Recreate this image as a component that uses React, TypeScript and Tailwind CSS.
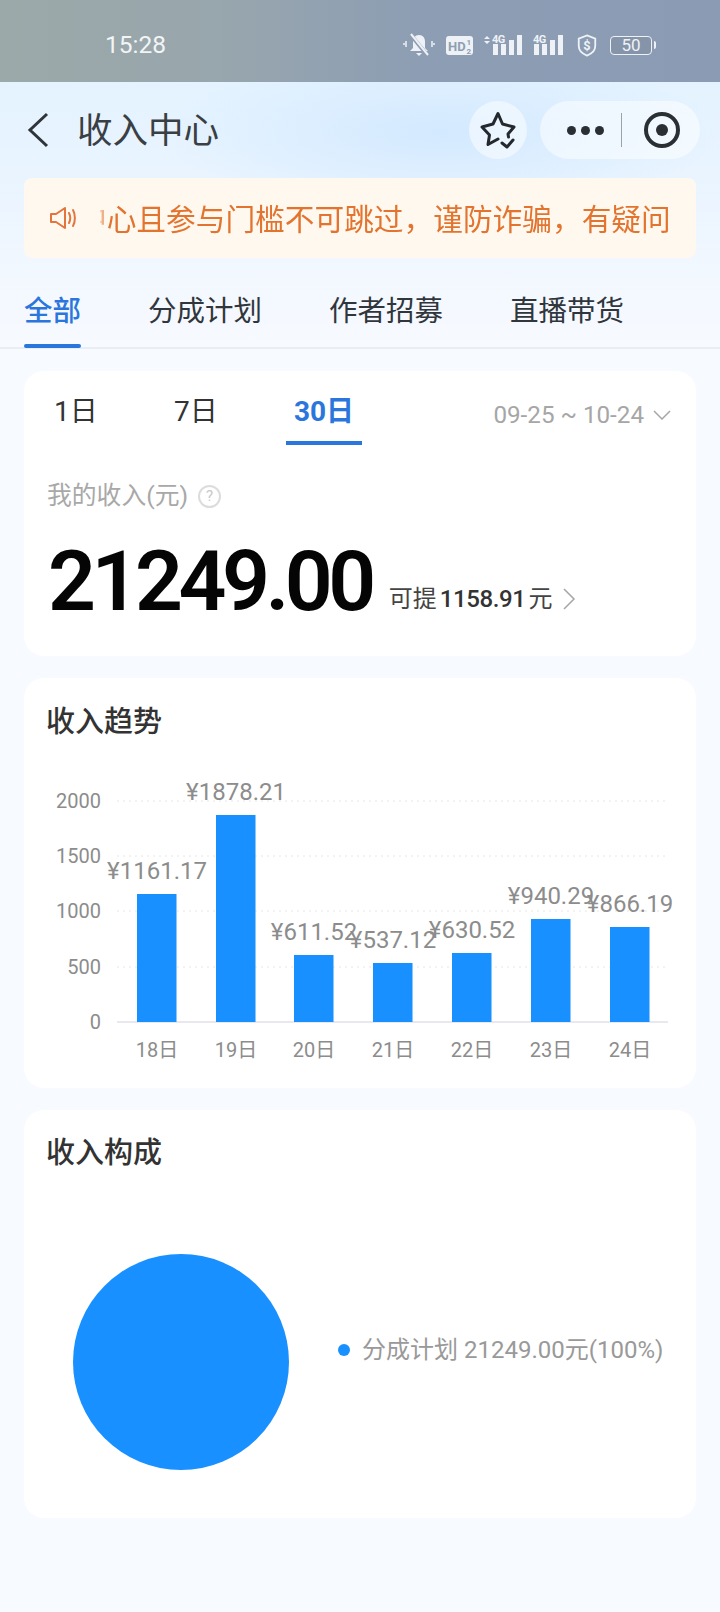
const FONT = "font-['Roboto','Noto_Sans_CJK_SC',sans-serif]";

const TABS = ["全部", "分成计划", "作者招募", "直播带货"];

const BARS = [
  { day: "18日", label: "¥1161.17", x: 113, top: 895 },
  { day: "19日", label: "¥1878.21", x: 192, top: 816 },
  { day: "20日", label: "¥611.52", x: 270, top: 956 },
  { day: "21日", label: "¥537.12", x: 349, top: 964 },
  { day: "22日", label: "¥630.52", x: 428, top: 954 },
  { day: "23日", label: "¥940.29", x: 507, top: 920 },
  { day: "24日", label: "¥866.19", x: 586, top: 928 },
];

// y positions are page pixels minus the chart's top edge (770)
const CHART_TOP = 770;
const TICKS = [
  { value: "2000", y: 802 },
  { value: "1500", y: 857 },
  { value: "1000", y: 912 },
  { value: "500", y: 968 },
  { value: "0", y: 1023 },
];

function SignalIcon({ arrows }: { arrows?: boolean }) {
  return (
    <svg width={arrows ? 39 : 30} height="22" viewBox={arrows ? "0 0 39 22" : "9 0 30 22"} fill="#eef2f6">
      {arrows && <path d="M1 5l3-3 3 3zM1 7l3 3 3-3z" />}
      <text x="9" y="9" fontSize="11" fontWeight="700" fontFamily="Roboto" letterSpacing="-0.5">4G</text>
      <rect x="10" y="10" width="5" height="11" />
      <rect x="18" y="10" width="5" height="11" />
      <rect x="26" y="6" width="5" height="15" />
      <rect x="34" y="1" width="5" height="20" />
    </svg>
  );
}

function StatusBar() {
  return (
    <div className="h-[82px] flex items-center justify-between pl-[105px] pr-[64px] pt-[8px] bg-[linear-gradient(90deg,#9ba9a9_0%,#98a6ad_30%,#8c9db4_60%,#8a9bb3_100%)]">
      <span className="text-[24.500px] text-[#f2f4f5]">15:28</span>
      <div className="flex items-center">
        <svg width="32" height="26" viewBox="0 0 32 26" fill="none" className="mr-[11px]">
          <path d="M16 3c-4 0-6 3-6 7v6l-3 3h18l-3-3v-6c0-4-2-7-6-7z" fill="#eef2f6" />
          <path d="M13 21h6l-3 3z" fill="#eef2f6" />
          <path d="M7 2l18 22" stroke="#8f9fb1" strokeWidth="4" />
          <path d="M8 2l17 21" stroke="#eef2f6" strokeWidth="2" />
          <path d="M3 9v6M1 11v2M29 9v6M31 11v2" stroke="#eef2f6" strokeWidth="1.5" />
        </svg>
        <svg width="27" height="19" viewBox="0 0 27 19" className="mr-[10px]">
          <rect width="27" height="19" rx="3" fill="#eef2f6" />
          <text x="2" y="14.500" fontSize="13" fontWeight="700" fontFamily="Roboto" fill="#8f9fb1">HD</text>
          <text x="20.500" y="8.500" fontSize="8" fontWeight="700" fontFamily="Roboto" fill="#8f9fb1">1</text>
          <text x="20.500" y="17.500" fontSize="8" fontWeight="700" fontFamily="Roboto" fill="#8f9fb1">2</text>
        </svg>
        <div className="mr-[11px]"><SignalIcon arrows /></div>
        <div className="mr-[13px]"><SignalIcon /></div>
        <svg width="22" height="25" viewBox="0 0 24 26" fill="none" className="mr-[12px]">
          <path d="M12 2l9 3.500v8c0 5-4 8.500-9 10.500-5-2-9-5.500-9-10.500v-8z" stroke="#eef2f6" strokeWidth="2" />
          <text x="12" y="18" textAnchor="middle" fontSize="14" fontWeight="700" fontFamily="Roboto" fill="#eef2f6">$</text>
        </svg>
        <div className="w-[42px] h-[19px] rounded-[4px] border border-[#eef2f6] bg-[#7f8a9a]/40 flex items-center justify-center text-[17px] leading-none text-[#eef2f6]">
          50
        </div>
        <div className="w-[2px] h-[8px] ml-[2px] bg-[#eef2f6] rounded-r-sm" />
      </div>
    </div>
  );
}

function NavBar() {
  return (
    <div className="h-[96px] flex items-center pl-[27px] pr-[20px]">
      <svg width="22" height="36" viewBox="0 0 22 36" fill="none" stroke="#2f3439" strokeWidth="3">
        <path d="M20 2L3 18l17 16" />
      </svg>
      <span className="ml-[28px] pt-[3px] text-[35.500px] leading-none text-[#3a3f44]">收入中心</span>
      <div className="ml-auto w-[58px] h-[58px] rounded-full bg-white/50 flex items-center justify-center">
        <svg width="36" height="38" viewBox="0 0 36 38" fill="none" stroke="#24292e" strokeWidth="3" strokeLinejoin="round" strokeLinecap="round">
          <path d="M18 28L8 33.500l1.500-9.500L2 16l11-3L18 2.500 22.500 13 34 16l-6 7 .5 3" />
          <path d="M22 32l5 4 6-7" />
        </svg>
      </div>
      <div className="ml-[13px] w-[160px] h-[58px] rounded-full bg-white/50 flex items-center pl-[27px]">
        <div className="flex gap-[5px]">
          <div className="w-[9px] h-[9px] rounded-full bg-[#2a2f34]" />
          <div className="w-[9px] h-[9px] rounded-full bg-[#2a2f34]" />
          <div className="w-[9px] h-[9px] rounded-full bg-[#2a2f34]" />
        </div>
        <div className="ml-[17px] w-px h-[34px] bg-[#9aa3ab]" />
        <div className="ml-[22px] w-[36px] h-[36px] rounded-full border-[4px] border-[#2a2f34] flex items-center justify-center">
          <div className="w-[12px] h-[12px] rounded-full bg-[#2a2f34]" />
        </div>
      </div>
    </div>
  );
}

function Notice() {
  return (
    <div className="mx-[24px] h-[80px] rounded-[8px] bg-[#fff8ee] flex items-center pl-[25px] pr-[27px]">
      <svg width="28" height="26" viewBox="0 0 28 26" fill="none" stroke="#e2743c" strokeWidth="2" className="shrink-0">
        <path d="M2 9v8h5l9 6V3L7 9z" strokeLinejoin="round" />
        <path d="M20 8c1.500 3 1.500 7 0 10M24 5c2.500 4.500 2.500 11.500 0 16" strokeLinecap="round" />
      </svg>
      <div className="ml-[23px] pt-[3px] flex-1 overflow-hidden whitespace-nowrap [mask-image:linear-gradient(90deg,rgba(0,0,0,0.2)_0px,#000_6px)]">
        <div className="-ml-[23px] text-[29.700px] leading-none text-[#e3742f]">中心且参与门槛不可跳过，谨防诈骗，有疑问题</div>
      </div>
    </div>
  );
}

function Tabs() {
  return (
    <div className="mt-[18px] h-[73px] border-b-2 border-[#e9eef4] flex pl-[24px] gap-[67px]">
      {TABS.map((tab, i) => (
        <div key={tab} className={`relative h-full flex items-center pt-[2px] text-[28.500px] ${i === 0 ? "text-[#2a76dc] font-medium" : "text-[#30363c]"}`}>
          {tab}
          {i === 0 && <div className="absolute left-0 right-0 -bottom-[1px] h-[4px] rounded-full bg-[#2a76dc]" />}
        </div>
      ))}
    </div>
  );
}

function SummaryCard() {
  return (
    <div className="mx-[24px] h-[285px] rounded-[20px] bg-white">
      <div className="flex items-start h-[74px] pl-[30px] pr-[25px]">
        <span className="mt-[22px] w-[120px] text-[28px] leading-[38px] text-[#333]">1日</span>
        <span className="mt-[22px] w-[112px] text-[28px] leading-[38px] text-[#333]">7日</span>
        <div className="w-[76px] h-[74px] border-b-4 border-[#2a76dc] flex justify-center">
          <span className="mt-[22px] text-[28px] leading-[38px] font-bold text-[#2a76dc]">30日</span>
        </div>
        <div className="ml-auto mt-[25px] flex items-center text-[24.200px] leading-[38px] text-[#a6a6a6]">
          09-25 ~ 10-24
          <svg width="18" height="10" viewBox="0 0 18 10" fill="none" stroke="#a6a6a6" strokeWidth="1.500" className="ml-[9px]">
            <path d="M1 1l8 8 8-8" />
          </svg>
        </div>
      </div>
      <div className="mt-[35px] ml-[23px] flex items-center h-[32px] text-[24.800px] text-[#a8a8a8]">
        我的收入(元)
        <div className="ml-[10px] w-[23px] h-[23px] rounded-full border-2 border-[#dcdcdc] flex items-center justify-center text-[15px] leading-none text-[#c8c8c8]">?</div>
      </div>
      <div className="mt-[28px] ml-[24px] flex items-end">
        <span className="text-[84px] leading-[84px] font-semibold tracking-[-4.500px] text-[#050505]">21249.00</span>
        <span className="ml-[17px] mb-[10px] text-[24px] leading-[30px] text-[#444]">可提</span>
        <span className="ml-[3px] mb-[10px] text-[24px] leading-[30px] font-medium tracking-[-0.400px] text-[#333]">1158.91</span>
        <span className="ml-[3px] mb-[10px] text-[24px] leading-[30px] text-[#444]">元</span>
        <svg width="14" height="22" viewBox="0 0 14 22" fill="none" stroke="#a6a6a6" strokeWidth="1.500" className="ml-[9px] mb-[14px]">
          <path d="M2 1l10 10L2 21" />
        </svg>
      </div>
    </div>
  );
}

function TrendChart() {
  return (
    <svg width="673" height="300" viewBox="0 0 673 300" className="mt-[28px]" fontFamily="Roboto, 'Noto Sans CJK SC', sans-serif">
      {TICKS.map((t) => (
        <g key={t.value}>
          <line
            x1="93"
            x2="644"
            y1={t.y - CHART_TOP}
            y2={t.y - CHART_TOP}
            stroke={t.value === "0" ? "#e8e8ee" : "#e6e6e6"}
            strokeWidth={t.value === "0" ? 2 : 1}
            strokeDasharray={t.value === "0" ? undefined : "2 4"}
          />
          <text x="77" y={t.y - CHART_TOP + 7} textAnchor="end" fontSize="20" fill="#8c8c8c">{t.value}</text>
        </g>
      ))}
      {BARS.map((b) => (
        <g key={b.day}>
          <rect x={b.x} y={b.top - CHART_TOP} width="39.500" height={1023 - b.top} fill="#1890ff" />
          <text x={b.x + 20} y={b.top - CHART_TOP - 15} textAnchor="middle" fontSize="24" fill="#8c8c8c">{b.label}</text>
          <text x={b.x + 20} y={1050 - CHART_TOP + 8} textAnchor="middle" fontSize="20" fill="#8c8c8c">{b.day}</text>
        </g>
      ))}
    </svg>
  );
}

export default function App() {
  return (
    <div className={`w-[720px] h-[1612px] overflow-hidden bg-[#f7faff] ${FONT}`}>
      <StatusBar />
      <div className="bg-[radial-gradient(ellipse_280px_80px_at_440px_50px,#d3e9ff_0%,rgba(211,233,255,0)_100%),linear-gradient(180deg,#e4f3ff_0%,#e9f4ff_35%,#f3f8ff_75%,#f7faff_100%)]">
        <NavBar />
        <Notice />
        <Tabs />
      </div>
      <div className="pt-[22px] flex flex-col gap-[22px]">
        <SummaryCard />
        <div className="mx-[24px] h-[410px] rounded-[20px] bg-white">
          <div className="pt-[25px] pl-[22px] text-[29px] leading-[38px] font-medium text-[#333]">收入趋势</div>
          <TrendChart />
        </div>
        <div className="mx-[24px] h-[408px] rounded-[20px] bg-white">
          <div className="pt-[24px] pl-[22px] text-[29px] leading-[38px] font-medium text-[#333]">收入构成</div>
          <div className="mt-[82px] flex items-center pl-[49px]">
            <div className="w-[216px] h-[216px] rounded-full bg-[#1890ff]" />
            <div className="ml-[49px] -mt-[24px] flex items-center">
              <div className="w-[12px] h-[12px] rounded-full bg-[#1890ff]" />
              <span className="ml-[12px] text-[24px] leading-[32px] text-[#999] whitespace-nowrap">分成计划 21249.00元(100%)</span>
            </div>
          </div>
        </div>
      </div>
    </div>
  );
}
